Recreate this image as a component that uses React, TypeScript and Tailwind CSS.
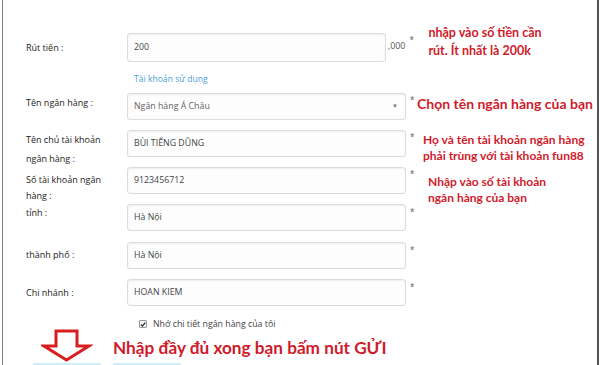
import React from "react";

const label = "text-[9px] text-[#222] font-['Open_Sans',sans-serif] w-[124px] pl-[23px] shrink-0 self-start";
const note = "text-[#cf1b2b] font-bold font-['Lato','Open_Sans',sans-serif] whitespace-nowrap";
const inputCls =
  "h-[27px] border border-[#dcdcdc] rounded-[3px] bg-[#fdfdfd] shadow-[inset_0_1px_2px_rgba(0,0,0,0.06)] flex items-center pl-[6px] text-[8.8px] text-[#444] font-['Open_Sans',sans-serif] shrink-0";

function Star({ top = 4 }: { top?: number }) {
  return (
    <span className="text-[8px] text-[#666] leading-none ml-[4px] w-[4px] shrink-0" style={{ marginTop: top }}>
      *
    </span>
  );
}

export default function App() {
  return (
    <div className="w-[600px] h-[365px] bg-white overflow-hidden pl-[2px] pr-[1px]">
      <div className="relative h-full border-l-[1.5px] border-l-[#7a7a7a] border-r-2 border-r-[#555] pt-[33px]">
        {/* Row 1 */}
        <div className="flex items-start h-[29px]">
          <div className={`${label} leading-[19px] pt-[5px]`}>Rút tiến :</div>
          <div className={`${inputCls} w-[259px] h-[29px]`}>200</div>
          <span className="text-[8.8px] text-[#555] ml-[2px] mt-[9px] leading-none font-['Open_Sans',sans-serif]">,000</span>
          <Star top={3} />
          <div className={`${note} text-[12.5px] leading-[18px] ml-[15px] mt-[-9px]`}>
            nhập vào số tiền cần
            <br />
            rút. Ít nhất là 200k
          </div>
        </div>
        <div className="pl-[131px] mt-[10px] text-[8.6px] text-[#4a9fd8] leading-[14px] font-['Open_Sans',sans-serif]">
          Tài khoản sử dụng
        </div>
        {/* Row 2 */}
        <div className="flex items-start mt-[7px] h-[27px]">
          <div className={`${label} leading-[19px] pt-[0px]`}>Tên ngân hàng :</div>
          <div className={`${inputCls} w-[279px] justify-between pr-[7px] text-[#666]`}>
            <span>Ngân hàng Á Châu</span>
            <span className="text-[6px] text-[#777]">▼</span>
          </div>
          <Star top={3} />
          <div className={`${note} text-[14px] leading-[20px] ml-[3px] mt-[1px]`}>Chọn tên ngân hàng của bạn</div>
        </div>
        {/* Row 3 */}
        <div className="flex items-start mt-[10px] h-[27px]">
          <div className={`${label} leading-[19px] pt-[0px]`}>
            Tên chủ tài khoản
            <br />
            ngân hàng :
          </div>
          <div className={`${inputCls} w-[279px]`}>BÙI TIẾNG DŨNG</div>
          <Star top={3} />
          <div className={`${note} text-[12px] leading-[16px] ml-[9px] mt-[2px]`}>
            Họ và tên tài khoản ngân hàng
            <br />
            phải trùng với tài khoản fun88
          </div>
        </div>
        {/* Row 4 */}
        <div className="flex items-start mt-[10px] h-[27px]">
          <div className={`${label} pt-[5px] leading-[16px]`}>
            Số tài khoản ngân
            <br />
            hàng :
          </div>
          <div className={`${inputCls} w-[279px]`}>9123456712</div>
          <Star top={3} />
          <div className={`${note} text-[12px] leading-[15.5px] ml-[14px] mt-[7px]`}>
            Nhập vào số tài khoản
            <br />
            ngân hàng của bạn
          </div>
        </div>
        {/* Row 5 */}
        <div className="flex items-start mt-[10px] h-[27px]">
          <div className={`${label} leading-[19px] mt-[-1px]`}>tỉnh :</div>
          <div className={`${inputCls} w-[279px]`}>Hà Nội</div>
          <Star top={4} />
        </div>
        {/* Row 6 */}
        <div className="flex items-start mt-[11px] h-[27px]">
          <div className={`${label} leading-[19px] pt-[3px]`}>thành phố :</div>
          <div className={`${inputCls} w-[279px]`}>Hà Nội</div>
          <Star top={4} />
        </div>
        {/* Row 7 */}
        <div className="flex items-start mt-[10px] h-[27px]">
          <div className={`${label} leading-[19px] pt-[4px]`}>Chi nhánh :</div>
          <div className={`${inputCls} w-[279px]`}>HOAN KIEM</div>
          <Star top={4} />
        </div>
        {/* Checkbox */}
        <div className="flex items-center pl-[136px] mt-[12px] h-[12px]">
          <span className="w-[8px] h-[8px] border border-[#999] bg-[#f4f4f4] flex items-center justify-center rounded-[1px]">
            <svg width="7" height="7" viewBox="0 0 10 10">
              <path d="M1.5 5.2 L4 7.8 L8.8 1.8" stroke="#222" strokeWidth="2" fill="none" />
            </svg>
          </span>
          <span className="ml-[6px] text-[8.8px] text-[#444] leading-[12px] font-['Open_Sans',sans-serif]">
            Nhớ chi tiết ngân hàng của tôi
          </span>
        </div>
        {/* Bottom instruction */}
        <div className="flex items-start mt-[-1px]">
          <svg width="52" height="34" viewBox="0 0 52 34" className="ml-[38px] shrink-0">
            <path
              d="M15 2 H36 V17 H48 L25.5 31 L3 17 H15 Z"
              fill="white"
              stroke="#d81e1e"
              strokeWidth="3"
              strokeLinejoin="miter"
            />
          </svg>
          <div className={`${note} text-[17.2px] leading-[22px] ml-[20px] mt-[8px]`}>
            Nhập đầy đủ xong bạn bấm nút GỬI
          </div>
        </div>
        <div className="absolute left-[30px] bottom-0 flex gap-[12px]">
          <div className="w-[68px] h-[2px] bg-[#cdeef5]" />
          <div className="w-[68px] h-[2px] bg-[#cdeef5]" />
        </div>
      </div>
    </div>
  );
}
